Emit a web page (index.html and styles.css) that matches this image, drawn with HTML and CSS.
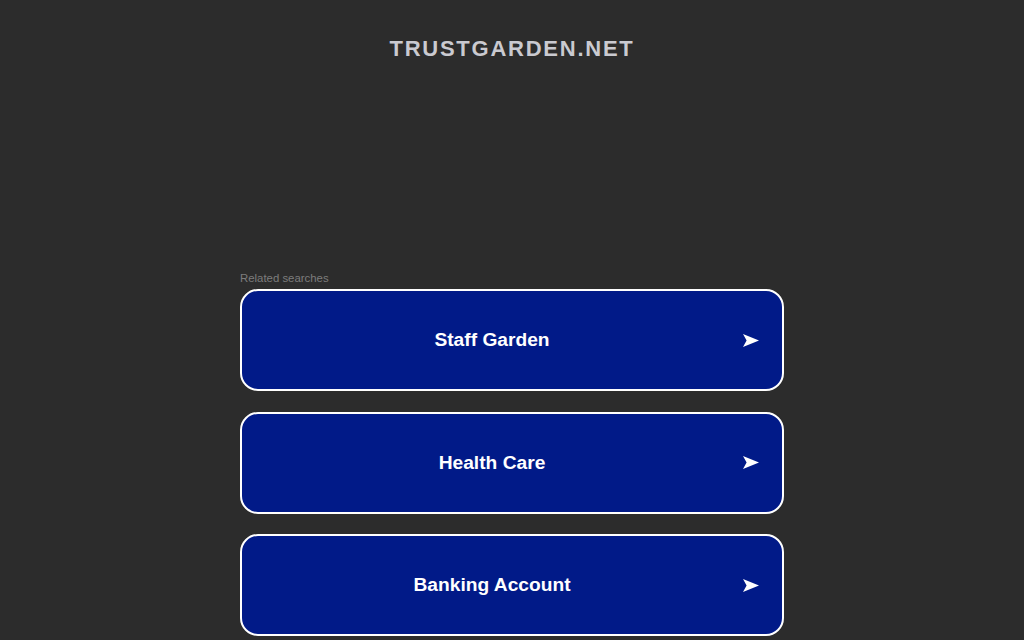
FILE: index.html
```html
<!DOCTYPE html>
<html lang="en">
<head>
<meta charset="utf-8">
<title>trustgarden.net</title>
<link rel="stylesheet" href="styles.css">
</head>
<body>
<header class="header">
  <h1 class="domain">TRUSTGARDEN.NET</h1>
</header>
<main class="content">
  <div class="related">Related searches</div>
  <ul class="links">
    <li><a class="link" href="#"><span class="label">Staff Garden</span><svg class="arrow" viewBox="0 0 16 13" width="16" height="13"><path d="M0 0 L16 6.5 L0 13 L3.6 6.5 Z" fill="#fff"/></svg></a></li>
    <li><a class="link" href="#"><span class="label">Health Care</span><svg class="arrow" viewBox="0 0 16 13" width="16" height="13"><path d="M0 0 L16 6.5 L0 13 L3.6 6.5 Z" fill="#fff"/></svg></a></li>
    <li><a class="link" href="#"><span class="label">Banking Account</span><svg class="arrow" viewBox="0 0 16 13" width="16" height="13"><path d="M0 0 L16 6.5 L0 13 L3.6 6.5 Z" fill="#fff"/></svg></a></li>
  </ul>
</main>
</body>
</html>
```
FILE: styles.css
```css
html, body {
  margin: 0;
  padding: 0;
  background: #2c2c2c;
  font-family: "Liberation Sans", Arial, sans-serif;
  overflow: hidden;
}
.header {
  padding-top: 36px;
  text-align: center;
}
.domain {
  margin: 0;
  font-size: 22px;
  line-height: 26px;
  font-weight: bold;
  letter-spacing: 1.75px;
  color: #cacad0;
}
.content {
  width: 544px;
  margin: 210px auto 0;
}
.related {
  font-size: 11.4px;
  line-height: 13px;
  color: #7c7c7c;
  margin-bottom: 4px;
}
.links {
  list-style: none;
  margin: 0;
  padding: 0;
  display: flex;
  flex-direction: column;
  gap: 20.5px;
}
.link {
  display: flex;
  align-items: center;
  height: 98px;
  border: 2px solid #fff;
  border-radius: 18px;
  background: #011a88;
  color: #fff;
  text-decoration: none;
  padding-right: 23px;
}
.label {
  flex: 1;
  text-align: center;
  font-size: 19.2px;
  font-weight: bold;
  padding-right: 1px;
}
.arrow {
  display: block;
  flex: none;
}
```
